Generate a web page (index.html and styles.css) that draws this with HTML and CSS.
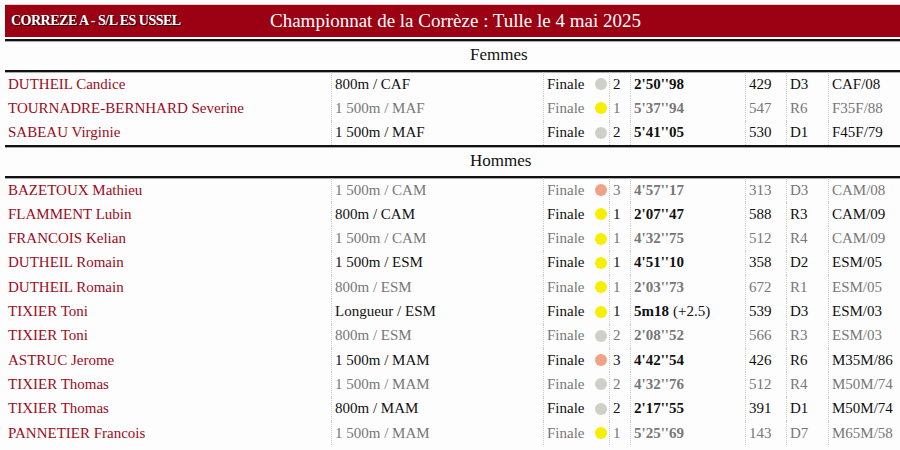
FILE: index.html
```html
<!DOCTYPE html>
<html lang="fr">
<head>
<meta charset="utf-8">
<title>Championnat de la Corrèze</title>
<link rel="stylesheet" href="styles.css">
</head>
<body>
<div class="page">
  <header class="topbar">
    <div class="club">CORREZE A - S/L ES USSEL</div>
    <div class="title">Championnat de la Corrèze : Tulle le 4 mai 2025</div>
  </header>
  <div class="rule"></div>

  <div class="section">Femmes</div>
  <div class="rule"></div>
  <div class="rows">
    <div class="row"><span class="c name">DUTHEIL Candice</span><span class="c ev">800m / CAF</span><span class="c rd">Finale <i class="dot silver"></i></span><span class="c pl">2</span><span class="c perf">2'50''98</span><span class="c pts">429</span><span class="c lv">D3</span><span class="c cat">CAF/08</span></div>
    <div class="row muted"><span class="c name">TOURNADRE-BERNHARD Severine</span><span class="c ev">1 500m / MAF</span><span class="c rd">Finale <i class="dot gold"></i></span><span class="c pl">1</span><span class="c perf">5'37''94</span><span class="c pts">547</span><span class="c lv">R6</span><span class="c cat">F35F/88</span></div>
    <div class="row"><span class="c name">SABEAU Virginie</span><span class="c ev">1 500m / MAF</span><span class="c rd">Finale <i class="dot silver"></i></span><span class="c pl">2</span><span class="c perf">5'41''05</span><span class="c pts">530</span><span class="c lv">D1</span><span class="c cat">F45F/79</span></div>
  </div>
  <div class="rule flush"></div>

  <div class="section">Hommes</div>
  <div class="rule"></div>
  <div class="rows">
    <div class="row muted"><span class="c name">BAZETOUX Mathieu</span><span class="c ev">1 500m / CAM</span><span class="c rd">Finale <i class="dot bronze"></i></span><span class="c pl">3</span><span class="c perf">4'57''17</span><span class="c pts">313</span><span class="c lv">D3</span><span class="c cat">CAM/08</span></div>
    <div class="row"><span class="c name">FLAMMENT Lubin</span><span class="c ev">800m / CAM</span><span class="c rd">Finale <i class="dot gold"></i></span><span class="c pl">1</span><span class="c perf">2'07''47</span><span class="c pts">588</span><span class="c lv">R3</span><span class="c cat">CAM/09</span></div>
    <div class="row muted"><span class="c name">FRANCOIS Kelian</span><span class="c ev">1 500m / CAM</span><span class="c rd">Finale <i class="dot gold"></i></span><span class="c pl">1</span><span class="c perf">4'32''75</span><span class="c pts">512</span><span class="c lv">R4</span><span class="c cat">CAM/09</span></div>
    <div class="row"><span class="c name">DUTHEIL Romain</span><span class="c ev">1 500m / ESM</span><span class="c rd">Finale <i class="dot gold"></i></span><span class="c pl">1</span><span class="c perf">4'51''10</span><span class="c pts">358</span><span class="c lv">D2</span><span class="c cat">ESM/05</span></div>
    <div class="row muted"><span class="c name">DUTHEIL Romain</span><span class="c ev">800m / ESM</span><span class="c rd">Finale <i class="dot gold"></i></span><span class="c pl">1</span><span class="c perf">2'03''73</span><span class="c pts">672</span><span class="c lv">R1</span><span class="c cat">ESM/05</span></div>
    <div class="row"><span class="c name">TIXIER Toni</span><span class="c ev">Longueur / ESM</span><span class="c rd">Finale <i class="dot gold"></i></span><span class="c pl">1</span><span class="c perf">5m18 <em>(+2.5)</em></span><span class="c pts">539</span><span class="c lv">D3</span><span class="c cat">ESM/03</span></div>
    <div class="row muted"><span class="c name">TIXIER Toni</span><span class="c ev">800m / ESM</span><span class="c rd">Finale <i class="dot silver"></i></span><span class="c pl">2</span><span class="c perf">2'08''52</span><span class="c pts">566</span><span class="c lv">R3</span><span class="c cat">ESM/03</span></div>
    <div class="row"><span class="c name">ASTRUC Jerome</span><span class="c ev">1 500m / MAM</span><span class="c rd">Finale <i class="dot bronze"></i></span><span class="c pl">3</span><span class="c perf">4'42''54</span><span class="c pts">426</span><span class="c lv">R6</span><span class="c cat">M35M/86</span></div>
    <div class="row muted"><span class="c name">TIXIER Thomas</span><span class="c ev">1 500m / MAM</span><span class="c rd">Finale <i class="dot silver"></i></span><span class="c pl">2</span><span class="c perf">4'32''76</span><span class="c pts">512</span><span class="c lv">R4</span><span class="c cat">M50M/74</span></div>
    <div class="row"><span class="c name">TIXIER Thomas</span><span class="c ev">800m / MAM</span><span class="c rd">Finale <i class="dot silver"></i></span><span class="c pl">2</span><span class="c perf">2'17''55</span><span class="c pts">391</span><span class="c lv">D1</span><span class="c cat">M50M/74</span></div>
    <div class="row muted"><span class="c name">PANNETIER Francois</span><span class="c ev">1 500m / MAM</span><span class="c rd">Finale <i class="dot gold"></i></span><span class="c pl">1</span><span class="c perf">5'25''69</span><span class="c pts">143</span><span class="c lv">D7</span><span class="c cat">M65M/58</span></div>
  </div>
</div>
</body>
</html>
```

FILE: styles.css
```css
html, body {
  margin: 0;
  padding: 0;
  background: #fdfdfd;
}

body {
  font-family: "Liberation Serif", serif;
  color: #111;
}

.page {
  padding: 4px 0 0 5px;
  width: 895px;
}

.topbar {
  display: flex;
  align-items: center;
  height: 32px;
  background: #9b0013;
  border-top: 1px solid #e8c8cc;
  color: #fff;
}

.club {
  width: 259px;
  padding-left: 6px;
  font-size: 14px;
  font-weight: bold;
  letter-spacing: -0.5px;
  text-shadow: 1px 1px 0 #3a0008, -1px 0 0 #5a0010;
}

.title {
  font-size: 19px;
  letter-spacing: 0;
}

.rule {
  height: 2px;
  background: #111;
  margin-top: 2px;
  box-shadow: 0 1px 0 #aaa;
}

.rule.flush {
  margin-top: 0;
}

.section {
  height: 27px;
  line-height: 27px;
  padding-left: 465px;
  font-size: 17px;
  color: #111;
}

.row {
  display: grid;
  grid-template-columns: 326px 212px 66px 21px 115px 41px 42px 1fr;
  height: 24.3px;
  align-items: stretch;
  font-size: 15px;
  color: #111;
}

.c {
  display: flex;
  align-items: center;
  padding-left: 3px;
  white-space: nowrap;
  border-left: 1px dotted #cfcfcf;
}

.c.name {
  border-left: none;
  color: #9b0c22;
}

.row.muted .c {
  color: #777;
}

.row.muted .c.name {
  color: #9b0c22;
}

.perf {
  font-weight: bold;
}

.perf em {
  font-style: normal;
  font-weight: normal;
  margin-left: 4px;
}

.dot {
  display: inline-block;
  width: 12px;
  height: 12px;
  border-radius: 50%;
  margin-left: 10px;
}

.dot.gold { background: #f6f000; }
.dot.silver { background: #cfcfc8; }
.dot.bronze { background: #f2a284; }
```
